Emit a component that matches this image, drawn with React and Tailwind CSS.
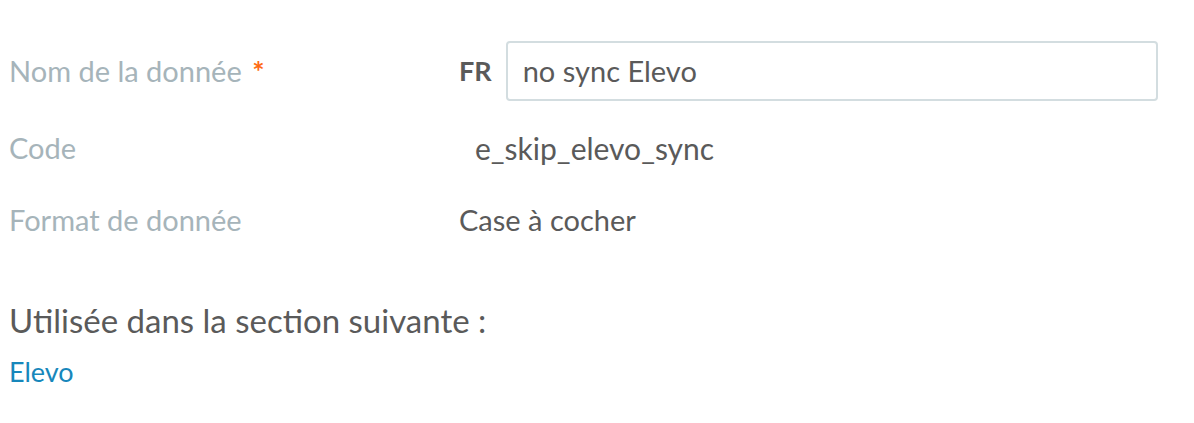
export default function App() {
  return (
    <div className="min-h-screen bg-white px-[9px] pt-[41px] font-['Lato','Open_Sans',sans-serif] text-[#5a5a5a]">
      <div className="grid grid-cols-[450px_1fr] items-center pr-[27px]">
        <div className="text-[29px] leading-[36px] text-[#a6b4ba]">
          Nom de la donnée <span className="ml-[3px] font-bold text-[#ff6a13]">*</span>
        </div>
        <div className="flex items-center gap-[14px]">
          <span className="text-[27px] font-bold leading-[36px] text-[#5a5a5a]">FR</span>
          <div className="flex h-[60px] flex-1 items-center rounded-[4px] border-2 border-[#d3dde0] px-[15px] text-[29px]">
            no sync Elevo
          </div>
        </div>
      </div>
      <div className="grid grid-cols-[450px_1fr] items-center pt-[29px] leading-[36px]">
        <div className="text-[29px] text-[#a6b4ba]">Code</div>
        <div className="pl-[16px] text-[30px]">e_skip_elevo_sync</div>
      </div>
      <div className="grid grid-cols-[450px_1fr] items-center pt-[36px] leading-[36px]">
        <div className="text-[29px] text-[#a6b4ba]">Format de donnée</div>
        <div className="text-[29px]">Case à cocher</div>
      </div>
      <h3 className="pt-[62px] text-[33px] leading-[40px] text-[#5a5a5a]">Utilisée dans la section suivante :</h3>
      <a className="block pt-[15px] text-[27px] leading-[34px] text-[#1787bb]">Elevo</a>
    </div>
  );
}
